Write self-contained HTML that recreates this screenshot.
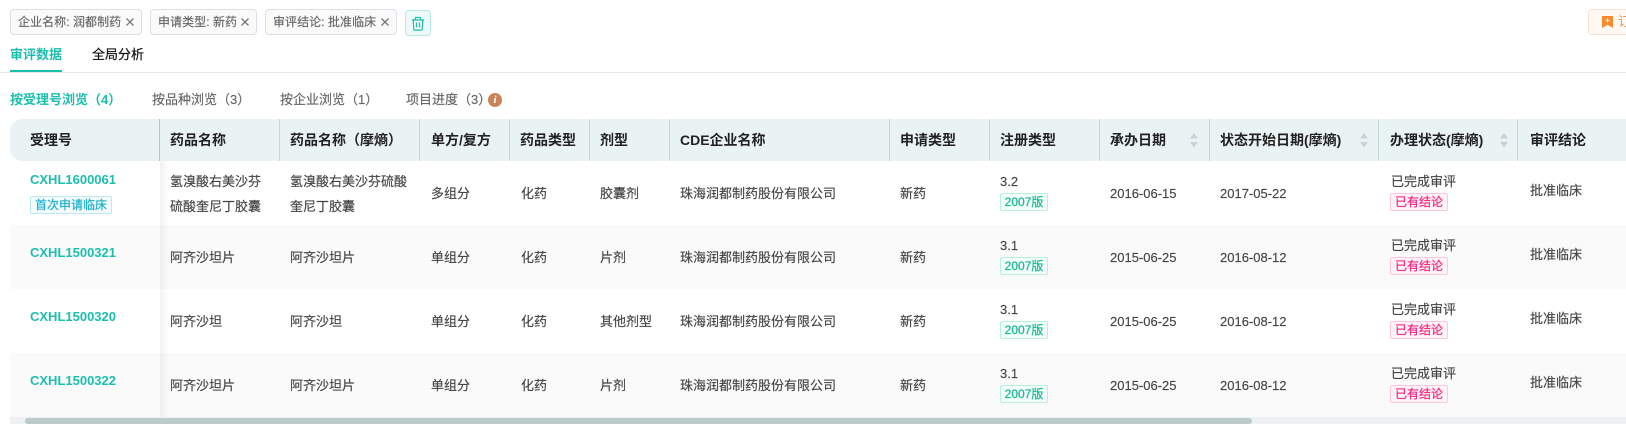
<!DOCTYPE html>
<html lang="zh-CN">
<head>
<meta charset="utf-8">
<title>审评数据</title>
<style>
html,body{margin:0;padding:0;background:#fff}
body{width:1626px;height:437px;overflow:hidden;position:relative;font-family:"Liberation Sans","Noto Sans CJK SC",sans-serif;font-size:13px;color:#444}
.a{position:absolute;white-space:nowrap}
.chip{position:absolute;top:9px;height:24px;line-height:24px;border:1px solid #dcdfe8;border-radius:4px;background:#fafafa;color:#666;font-size:12px;box-sizing:content-box;white-space:nowrap}
.chip span{position:absolute;left:7px;top:0;-webkit-text-stroke:.15px #666;letter-spacing:.05px}
.chip svg{position:absolute;top:7px}
.tab{position:absolute;top:45px;line-height:20px;font-size:13px;color:#111;white-space:nowrap;-webkit-text-stroke:.2px #111}
.sub{position:absolute;top:90px;line-height:20px;font-size:13px;color:#666;white-space:nowrap;-webkit-text-stroke:.15px #666}
.head{position:absolute;left:10px;top:119px;width:1616px;height:42px;background:#e9f3f4;border-radius:12px 0 0 12px}
.sep{position:absolute;top:119px;width:1px;height:42px;background:#c4d6d6}
.h{position:absolute;top:130px;line-height:20px;font-size:14px;font-weight:700;color:#222;white-space:nowrap}
.row{position:absolute;left:10px;width:1616px;height:64px}
.alt{background:#fafafa}
.c{position:absolute;margin-top:1px;line-height:20px;font-size:13px;color:#444;white-space:nowrap;-webkit-text-stroke:.15px #444}
.id{position:absolute;left:20px;margin-top:1px;line-height:20px;font-size:13px;font-weight:700;color:#1cbfae}
.tag{position:absolute;height:16px;line-height:16px;border:1px solid;border-radius:2px;font-size:12px;text-align:center;white-space:nowrap;-webkit-text-stroke:.2px currentColor}
.v{left:990px;top:32px;width:46px;color:#10b892;border-color:#bdeee2;background:#f2fcf9}
.s{left:1380px;top:32px;width:56px;color:#f5237d;border-color:#fdc6de;background:#fff3f8}
.shadow{position:absolute;left:160px;top:161px;width:9px;height:256px;background:linear-gradient(to right,rgba(0,0,0,.05),rgba(0,0,0,0))}
.sort{position:absolute;top:133px}
</style>
</head>
<body>

<div class="chip" style="left:10px;width:130px"><span>企业名称: 润都制药</span><svg style="left:114px" width="10" height="10" viewBox="0 0 10 10"><path d="M1.5 1.5l7 7M8.500 1.500l-7 7" stroke="#777" stroke-width="1.300" fill="none"/></svg></div>
<div class="chip" style="left:150px;width:105px"><span>申请类型: 新药</span><svg style="left:89px" width="10" height="10" viewBox="0 0 10 10"><path d="M1.5 1.5l7 7M8.500 1.500l-7 7" stroke="#777" stroke-width="1.300" fill="none"/></svg></div>
<div class="chip" style="left:265px;width:130px"><span>审评结论: 批准临床</span><svg style="left:114px" width="10" height="10" viewBox="0 0 10 10"><path d="M1.5 1.5l7 7M8.500 1.500l-7 7" stroke="#777" stroke-width="1.300" fill="none"/></svg></div>

<div class="a" style="left:405px;top:10px;width:24px;height:24px;border:1px solid #b5e9e3;border-radius:4px;background:#effaf8"></div>
<svg class="a" style="left:411px;top:16px" width="14" height="15" viewBox="0 0 14 15" fill="none" stroke="#1cbfae" stroke-width="1.200"><path d="M1 4h12M4 4l.6-2.500h4.800L10 4M2.200 4l.6 9.500c0 .3.300.6.600.6h7.200c.3 0 .6-.3.600-.6L11.800 4M5.500 6.500v5M8.500 6.500v5"/></svg>

<div class="a" style="left:1588px;top:9px;width:60px;height:24px;border:1px solid #f8e2d3;border-radius:4px;background:#fff8f3"></div>
<svg class="a" style="left:1602px;top:16px" width="11" height="12" viewBox="0 0 11 12"><path d="M0 0h11v12L5.500 8.800 0 12z" fill="#fb8a2e"/><path d="M5.500 2.500v4M3.500 4.500h4" stroke="#fff" stroke-width="1.100"/></svg>
<div class="a" style="left:1618px;top:12px;line-height:20px;font-size:13px;color:#fb8a2e">订</div>

<div class="tab" style="left:10px;color:#1cbfae;font-weight:700;-webkit-text-stroke:0">审评数据</div>
<div class="tab" style="left:92px">全局分析</div>
<div class="a" style="left:0;top:72px;width:1626px;height:1px;background:#e6e8ec"></div>
<div class="a" style="left:10px;top:70px;width:52px;height:2px;background:#1cbfae"></div>

<div class="sub" style="left:10px;color:#1cbfae;font-weight:700;-webkit-text-stroke:0">按受理号浏览（4）</div>
<div class="sub" style="left:152px">按品种浏览（3）</div>
<div class="sub" style="left:280px">按企业浏览（1）</div>
<div class="sub" style="left:406px">项目进度（3）</div>
<div class="a" style="left:488px;top:93px;width:14px;height:14px;border-radius:50%;background:#c98359;color:#fff;font:italic 700 11px/14px 'Liberation Serif',serif;text-align:center">i</div>

<div class="head"></div>
<div class="sep" style="left:159px;background:#b5c8c8"></div>
<div class="sep" style="left:279px"></div>
<div class="sep" style="left:419px"></div>
<div class="sep" style="left:509px"></div>
<div class="sep" style="left:589px"></div>
<div class="sep" style="left:669px"></div>
<div class="sep" style="left:889px"></div>
<div class="sep" style="left:989px"></div>
<div class="sep" style="left:1099px"></div>
<div class="sep" style="left:1209px"></div>
<div class="sep" style="left:1378px"></div>
<div class="sep" style="left:1517px"></div>

<div class="h" style="left:30px">受理号</div>
<div class="h" style="left:170px">药品名称</div>
<div class="h" style="left:290px">药品名称（摩熵）</div>
<div class="h" style="left:431px">单方/复方</div>
<div class="h" style="left:520px">药品类型</div>
<div class="h" style="left:600px">剂型</div>
<div class="h" style="left:680px">CDE企业名称</div>
<div class="h" style="left:900px">申请类型</div>
<div class="h" style="left:1000px">注册类型</div>
<div class="h" style="left:1110px">承办日期</div>
<div class="h" style="left:1220px">状态开始日期(摩熵)</div>
<div class="h" style="left:1390px">办理状态(摩熵)</div>
<div class="h" style="left:1530px">审评结论</div>

<svg class="sort" style="left:1189px" width="10" height="15" viewBox="0 0 10 15"><path d="M5 0l4 5.500H1z" fill="#ccd0d6"/><path d="M5 14.500l-4-5.500h8z" fill="#ccd0d6"/></svg>
<svg class="sort" style="left:1359px" width="10" height="15" viewBox="0 0 10 15"><path d="M5 0l4 5.500H1z" fill="#ccd0d6"/><path d="M5 14.500l-4-5.500h8z" fill="#ccd0d6"/></svg>
<svg class="sort" style="left:1499px" width="10" height="15" viewBox="0 0 10 15"><path d="M5 0l4 5.500H1z" fill="#ccd0d6"/><path d="M5 14.500l-4-5.500h8z" fill="#ccd0d6"/></svg>

<div class="row" style="top:161px">
  <div class="id" style="top:8px">CXHL1600061</div>
  <div class="tag" style="left:20px;top:35px;width:80px;color:#19aecb;border-color:#bfe9f1;background:#f3fbfd">首次申请临床</div>
  <div class="c" style="left:160px;top:10px">氢溴酸右美沙芬</div>
  <div class="c" style="left:160px;top:35px">硫酸奎尼丁胶囊</div>
  <div class="c" style="left:280px;top:10px">氢溴酸右美沙芬硫酸</div>
  <div class="c" style="left:280px;top:35px">奎尼丁胶囊</div>
  <div class="c" style="left:421px;top:22px">多组分</div>
  <div class="c" style="left:511px;top:22px">化药</div>
  <div class="c" style="left:590px;top:22px">胶囊剂</div>
  <div class="c" style="left:670px;top:22px">珠海润都制药股份有限公司</div>
  <div class="c" style="left:890px;top:22px">新药</div>
  <div class="c" style="left:990px;top:10px">3.2</div>
  <div class="tag v">2007版</div>
  <div class="c" style="left:1100px;top:22px">2016-06-15</div>
  <div class="c" style="left:1210px;top:22px">2017-05-22</div>
  <div class="c" style="left:1381px;top:10px">已完成审评</div>
  <div class="tag s">已有结论</div>
  <div class="c" style="left:1520px;top:19px">批准临床</div>
</div>

<div class="row alt" style="top:225px">
  <div class="id" style="top:17px">CXHL1500321</div>
  <div class="c" style="left:160px;top:22px">阿齐沙坦片</div>
  <div class="c" style="left:280px;top:22px">阿齐沙坦片</div>
  <div class="c" style="left:421px;top:22px">单组分</div>
  <div class="c" style="left:511px;top:22px">化药</div>
  <div class="c" style="left:590px;top:22px">片剂</div>
  <div class="c" style="left:670px;top:22px">珠海润都制药股份有限公司</div>
  <div class="c" style="left:890px;top:22px">新药</div>
  <div class="c" style="left:990px;top:10px">3.1</div>
  <div class="tag v">2007版</div>
  <div class="c" style="left:1100px;top:22px">2015-06-25</div>
  <div class="c" style="left:1210px;top:22px">2016-08-12</div>
  <div class="c" style="left:1381px;top:10px">已完成审评</div>
  <div class="tag s">已有结论</div>
  <div class="c" style="left:1520px;top:19px">批准临床</div>
</div>

<div class="row" style="top:289px">
  <div class="id" style="top:17px">CXHL1500320</div>
  <div class="c" style="left:160px;top:22px">阿齐沙坦</div>
  <div class="c" style="left:280px;top:22px">阿齐沙坦</div>
  <div class="c" style="left:421px;top:22px">单组分</div>
  <div class="c" style="left:511px;top:22px">化药</div>
  <div class="c" style="left:590px;top:22px">其他剂型</div>
  <div class="c" style="left:670px;top:22px">珠海润都制药股份有限公司</div>
  <div class="c" style="left:890px;top:22px">新药</div>
  <div class="c" style="left:990px;top:10px">3.1</div>
  <div class="tag v">2007版</div>
  <div class="c" style="left:1100px;top:22px">2015-06-25</div>
  <div class="c" style="left:1210px;top:22px">2016-08-12</div>
  <div class="c" style="left:1381px;top:10px">已完成审评</div>
  <div class="tag s">已有结论</div>
  <div class="c" style="left:1520px;top:19px">批准临床</div>
</div>

<div class="row alt" style="top:353px">
  <div class="id" style="top:17px">CXHL1500322</div>
  <div class="c" style="left:160px;top:22px">阿齐沙坦片</div>
  <div class="c" style="left:280px;top:22px">阿齐沙坦片</div>
  <div class="c" style="left:421px;top:22px">单组分</div>
  <div class="c" style="left:511px;top:22px">化药</div>
  <div class="c" style="left:590px;top:22px">片剂</div>
  <div class="c" style="left:670px;top:22px">珠海润都制药股份有限公司</div>
  <div class="c" style="left:890px;top:22px">新药</div>
  <div class="c" style="left:990px;top:10px">3.1</div>
  <div class="tag v">2007版</div>
  <div class="c" style="left:1100px;top:22px">2015-06-25</div>
  <div class="c" style="left:1210px;top:22px">2016-08-12</div>
  <div class="c" style="left:1381px;top:10px">已完成审评</div>
  <div class="tag s">已有结论</div>
  <div class="c" style="left:1520px;top:19px">批准临床</div>
</div>

<div class="shadow"></div>
<div class="a" style="left:10px;top:417px;width:1616px;height:7px;background:#eef1f3"></div>
<div class="a" style="left:25px;top:418px;width:1227px;height:6px;border-radius:3px;background:#bccaca"></div>

</body>
</html>
